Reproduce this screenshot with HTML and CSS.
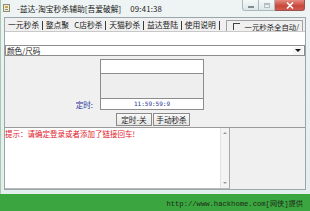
FILE: index.html
```html
<!DOCTYPE html>
<html lang="zh-CN">
<head>
<meta charset="utf-8">
<title>益达-淘宝秒杀辅助</title>
<link rel="stylesheet" href="styles.css">
</head>
<body>
<div class="screen">
  <div class="window">
    <div class="titlebar">
      <svg class="appicon" width="7" height="8" viewBox="0 0 7 8">
        <rect x="0.5" y="0.5" width="6" height="7" fill="#f3eccf" stroke="#8c8c7a"/>
        <rect x="2" y="2" width="3" height="2" fill="#c9a64a"/>
        <rect x="2" y="5" width="3" height="1" fill="#8c8c7a"/>
      </svg>
      <span class="title">-益达-淘宝秒杀辅助[吾爱破解]</span>
      <span class="clock">09:41:38</span>
      <div class="controls">
        <span class="ctl min"><span class="minbar"></span></span>
        <span class="ctl max"><span class="maxbox"></span></span>
        <span class="ctl close">
          <svg width="8" height="7" viewBox="0 0 8 7"><path d="M1 0.5 L7 6.5 M7 0.5 L1 6.5" stroke="#ffffff" stroke-width="1.6"/></svg>
        </span>
      </div>
    </div>
    <div class="client">
      <div class="tabs">
        <span class="tab first">一元秒杀</span><span class="sep"></span>
        <span class="tab">整点聚</span>
        <span class="tab sel">C店秒杀</span><span class="sep"></span>
        <span class="tab">天猫秒杀</span><span class="sep"></span>
        <span class="tab">益达登陆</span><span class="sep"></span>
        <span class="tab">使用说明</span><span class="sep"></span>
        <span class="check"><span class="checkbox"></span><span class="checklabel">一元秒杀全自动/</span></span>
      </div>
      <div class="page"></div>
      <div class="combo">
        <span class="combotext">颜色/尺码</span>
        <span class="dropbtn"><span class="tri"></span></span>
      </div>
      <div class="mid">
        <div class="timer">
          <span class="label">定时:</span>
          <div class="grid">
            <div class="row r1"></div>
            <div class="row r2"></div>
            <div class="row r3">11:59:59:9</div>
          </div>
        </div>
        <div class="btns">
          <span class="btn b1">定时-关</span>
          <span class="btn b2">手动秒杀</span>
        </div>
      </div>
      <div class="bottom">
        <div class="log">
          <div class="logtext">提示：请确定登录或者添加了链接回车!</div>
          <div class="scroll"><span class="up"></span><span class="down"></span></div>
        </div>
        <div class="side"></div>
      </div>
    </div>
  </div>
  <div class="footer">http://www.hackhome.com[网侠]提供</div>
</div>
</body>
</html>
```

FILE: styles.css
```css
html, body {
  margin: 0;
  padding: 0;
  width: 310px;
  height: 211px;
  overflow: hidden;
}
body {
  font-family: "Noto Sans CJK SC", "Liberation Sans", sans-serif;
  font-size: 8px;
  color: #1a1a1a;
}
.screen {
  width: 310px;
  height: 211px;
  display: flex;
  flex-direction: column;
  background: #3ba53f;
}
.window {
  height: 194px;
  box-sizing: border-box;
  background: linear-gradient(#eef4f3, #e3eeed);
  border-left: 1px solid #a7c9b2;
  padding: 0 4px 4px 3px;
  display: flex;
  flex-direction: column;
}
.titlebar {
  height: 17px;
  margin: 0 -4px 0 -3px;
  display: flex;
  align-items: flex-start;
}
.appicon {
  margin: 4px 0 0 2px;
  flex: none;
}
.title {
  margin-left: 7px;
  line-height: 17px;
  height: 17px;
  font-size: 7.8px;
  white-space: nowrap;
}
.clock {
  margin-left: 9px;
  line-height: 17px;
  font-size: 7.8px;
  letter-spacing: 0.2px;
}
.controls {
  margin-left: auto;
  margin-right: 5px;
  display: flex;
  height: 11px;
}
.ctl {
  height: 11px;
  box-sizing: border-box;
  display: flex;
  align-items: center;
  justify-content: center;
  border: 1px solid #a9b9bd;
  border-top: none;
}
.min {
  width: 17px;
  border-radius: 0 0 0 3px;
  background: linear-gradient(#f4f8f8, #dde7e8);
}
.max {
  width: 16px;
  border-left: none;
  background: linear-gradient(#f4f8f8, #dde7e8);
}
.minbar {
  width: 6px;
  height: 2px;
  background: #7f8d92;
  margin-top: 3px;
}
.maxbox {
  width: 6px;
  height: 5px;
  box-sizing: border-box;
  border: 1px solid #b3bec2;
  border-top-width: 2px;
}
.close {
  width: 30px;
  border-left: none;
  border-color: #a0504a;
  border-radius: 0 0 3px 0;
  background: linear-gradient(#e48a80, #c8463a 60%, #d15d4f);
}
.client {
  flex: 1;
  background: #f0f0f0;
  border: 1px solid #9aa6ac;
  display: flex;
  flex-direction: column;
}
.tabs {
  height: 13px;
  display: flex;
  align-items: center;
  white-space: nowrap;
}
.tab {
  font-size: 7.8px;
  line-height: 13px;
}
.tab.first {
  margin-left: 3px;
}
.tab.sel {
  margin-left: 5px;
}
.sep {
  width: 1px;
  height: 9px;
  margin: 1px 2.8px 0;
  background: #3a3a3a;
}
.check {
  margin-left: 4px;
  align-self: flex-end;
  width: 77px;
  height: 11px;
  box-sizing: border-box;
  border: 1px solid #a0a0a0;
  border-bottom: none;
  display: flex;
  align-items: center;
}
.checkbox {
  width: 6px;
  height: 6px;
  margin-left: 6px;
  border-top: 1px solid #404040;
  border-left: 1px solid #404040;
}
.checklabel {
  margin-left: 4px;
  font-size: 7.4px;
}
.page {
  height: 14px;
  background: #ffffff;
  border-top: 1px solid #c8c8c8;
  box-sizing: border-box;
}
.combo {
  height: 11px;
  box-sizing: border-box;
  background: #ffffff;
  border: 1px solid #8d8d8d;
  display: flex;
  align-items: center;
}
.combotext {
  margin-left: 1px;
  font-size: 7.6px;
  line-height: 10px;
}
.dropbtn {
  margin-left: auto;
  margin-right: 1px;
  width: 10px;
  height: 8px;
  background: #f4f4f4;
  display: flex;
  align-items: center;
  justify-content: center;
}
.tri {
  width: 0;
  height: 0;
  border-left: 3px solid transparent;
  border-right: 3px solid transparent;
  border-top: 3px solid #111;
}
.mid {
  height: 71px;
  flex: none;
  padding-top: 3px;
  box-sizing: border-box;
}
.timer {
  display: flex;
  align-items: flex-end;
}
.label {
  width: 95px;
  box-sizing: border-box;
  padding-right: 7px;
  text-align: right;
  color: #2a33a0;
  font-size: 7.6px;
  line-height: 11px;
}
.grid {
  width: 104px;
  box-sizing: border-box;
  border: 1px solid #8c8c8c;
}
.row {
  box-sizing: border-box;
}
.r1 {
  height: 14px;
  background: #ffffff;
  border-bottom: 1px solid #8c8c8c;
}
.r2 {
  height: 25px;
  background: #eeeeee;
  border-bottom: 1px solid #8c8c8c;
}
.r3 {
  height: 10px;
  background: #ffffff;
  color: #22338e;
  font-family: "DejaVu Sans Mono", "Liberation Mono", monospace;
  font-size: 6px;
  line-height: 10px;
  text-align: center;
}
.btns {
  display: flex;
  gap: 1px;
  margin: 3px 0 0 111px;
}
.btn {
  height: 13px;
  box-sizing: border-box;
  border: 1px solid #8a8a8a;
  background: linear-gradient(#f8f8f8, #e6e6e6);
  font-size: 7.6px;
  line-height: 11px;
  display: flex;
  align-items: center;
  justify-content: center;
}
.b1 { width: 36px; }
.b2 { width: 37px; }
.bottom {
  flex: 1;
  display: flex;
  border-top: 1px solid #9a9a9a;
}
.log {
  width: 224px;
  flex: none;
  display: flex;
  background: #ffffff;
  border-right: 1px solid #a8a8a8;
  border-bottom: 1px solid #b8b8b8;
}
.logtext {
  flex: 1;
  color: #e0202c;
  font-size: 7.5px;
  line-height: 9px;
  padding: 1px 0 0 0;
  white-space: nowrap;
}
.scroll {
  width: 9px;
  background: #f3f3f3;
  border-left: 1px solid #e2e2e2;
  display: flex;
  flex-direction: column;
  justify-content: space-between;
  align-items: center;
  padding: 4px 0;
  box-sizing: border-box;
}
.up {
  width: 0;
  height: 0;
  border-left: 2px solid transparent;
  border-right: 2px solid transparent;
  border-bottom: 2px solid #9a9a9a;
}
.down {
  width: 0;
  height: 0;
  border-left: 2px solid transparent;
  border-right: 2px solid transparent;
  border-top: 2px solid #9a9a9a;
}
.side {
  flex: 1;
  background: #f0f0f0;
}
.footer {
  flex: 1;
  display: flex;
  align-items: center;
  justify-content: flex-end;
  padding-right: 7px;
  font-family: "Liberation Mono", "Noto Sans CJK SC", monospace;
  font-size: 7.2px;
  color: #1b2a1b;
  white-space: nowrap;
}
```
